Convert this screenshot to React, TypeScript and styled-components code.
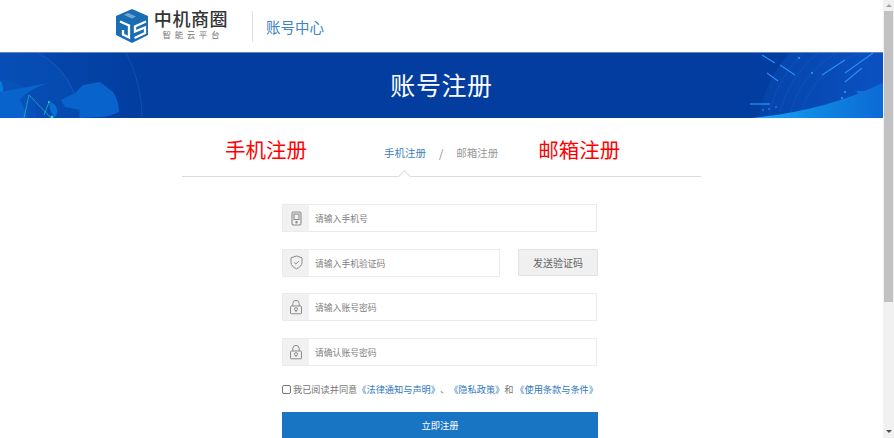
import React from "react";
import styled, { createGlobalStyle } from "styled-components";

const Global = createGlobalStyle`
  html, body { margin: 0; padding: 0; overflow: hidden; background: #fff; }
  * { box-sizing: border-box; }
`;
const Shell = styled.div`
  width: 894px; height: 438px; display: flex; overflow: hidden;
  font-family: "Noto Sans CJK SC", "Liberation Sans", sans-serif; background: #fff;
`;
const Main = styled.div`flex: 1; min-width: 0; display: flex; flex-direction: column;`;
const Header = styled.header`
  height: 52px; flex: none; display: flex; align-items: center; padding: 0 0 0 115px; background: #fff;
`;
const LogoWords = styled.div`
  display: flex; flex-direction: column; align-items: center; margin-left: 5px; width: 74px; margin-top: -2px;
  font-family: "Liberation Sans", "Noto Sans CJK SC", sans-serif;
`;
const LogoName = styled.div`
  font-size: 18px; line-height: 20px; font-weight: 500; color: #333; letter-spacing: 0.6px; white-space: nowrap;
`;
const LogoSub = styled.div`font-size: 8.5px; line-height: 11px; color: #777; letter-spacing: 3.6px; margin-right: -3.6px; white-space: nowrap;`;
const Divider = styled.div`width: 1px; height: 31px; background: #e2e2e2; margin: 0 13px 0 24px;`;
const CenterTitle = styled.div`font-size: 14.5px; color: #3d83c5; white-space: nowrap; margin-top: 1px;`;
const Banner = styled.section`
  position: relative; height: 66px; flex: none; display: flex; align-items: center; justify-content: center;
  overflow: hidden; background: #023d9f; border-top: 1px solid #5f86c6; padding-bottom: 3px;
`;
const BannerArt = styled.svg`position: absolute; inset: 0; width: 100%; height: 100%;`;
const BannerTitle = styled.h1`
  position: relative; margin: 0; font-size: 25px; font-weight: 400; color: #fff; letter-spacing: 0.6px; line-height: 1;
`;
const Content = styled.main`display: flex; flex-direction: column; align-items: center;`;
const TabBar = styled.div`
  position: relative; width: 519px; height: 59px; display: flex; align-items: center;
  border-bottom: 1px solid #dcdcdc; padding-left: 43px;
`;
const RedLabel = styled.span`font-size: 20.5px; line-height: 1; color: #ff0000; white-space: nowrap; margin-top: 5px;`;
const Tab = styled.span<{ $active?: boolean }>`
  font-size: 10.5px; line-height: 1; white-space: nowrap; margin-top: 12px;
  color: ${(p) => (p.$active ? "#3f7fbd" : "#999")};
`;
const Slash = styled.span`font-size: 11px; color: #888; line-height: 1; margin: 12px 13px 0 13px;`;
const Notch = styled.i`
  position: absolute; left: 218px; bottom: -5px; width: 9px; height: 9px; background: #fff;
  border-left: 1px solid #dcdcdc; border-top: 1px solid #dcdcdc; transform: rotate(45deg);
`;
const Form = styled.form`
  width: 316px; margin-left: -3px; padding-top: 27px; display: flex; flex-direction: column;
`;
const Row = styled.div`display: flex; justify-content: space-between; height: 28px; margin-bottom: 16.5px;`;
const Field = styled.label<{ $w: number }>`
  width: ${(p) => p.$w}px; height: 28px; display: flex; border: 1px solid #ebebeb; background: #fff;
`;
const IconBox = styled.span`
  width: 26px; flex: none; display: flex; align-items: center; justify-content: center; background: #f1f1f1;
`;
const Placeholder = styled.span`
  flex: 1; padding: 1px 0 0 6px; font-size: 8.8px; line-height: 26px; color: #808080; white-space: nowrap;
`;
const SendBtn = styled.button`
  width: 80px; height: 27px; padding: 0; border: 1px solid #e2e2e2; border-radius: 1px; background: #f0f0f0;
  font: inherit; font-size: 10px; color: #666;
`;
const Agree = styled.div`
  display: flex; align-items: center; height: 12px; margin-top: 1px; font-size: 9.2px; line-height: 12px; color: #777; white-space: nowrap;
`;
const Check = styled.span`
  width: 9px; height: 9px; border: 1px solid #777; border-radius: 2px; background: #fff; margin: 0 2px 0 0; flex: none;
`;
const DocLink = styled.a`color: #2f78bd;`;
const Gap = styled.span<{ $w: number }>`display: inline-block; width: ${(p) => p.$w}px;`;
const Submit = styled.button`
  width: 316px; height: 34px; margin-top: 17px; flex: none; border: 0; padding: 0 0 9px; background: #1875c3; color: #fff; font: inherit; font-size: 9.3px;
`;
const Rail = styled.div`
  width: 11px; flex: none; height: 438px; background: #f1f1f1; display: flex; flex-direction: column; align-items: center;
`;
const Arrow = styled.i<{ $down?: boolean }>`
  width: 0; height: 0; border-left: 3px solid transparent; border-right: 3px solid transparent; flex: none;
  ${(p) => (p.$down ? "border-top: 3px solid #505050; margin-top: auto; margin-bottom: 5px;" : "border-bottom: 3px solid #a3a3a3; margin-top: 4px;")}
`;
const Thumb = styled.div`width: 9px; height: 291px; margin-top: 4px; background: #c1c1c1; flex: none;`;

const PhoneIcon = () => (
  <svg width="13" height="15" viewBox="0 0 13 15" fill="none" stroke="#8b8b8b" strokeWidth="1.1">
    <rect x="2" y="1" width="9" height="13" rx="1.5" />
    <rect x="4" y="3" width="5" height="5.5" />
    <circle cx="6.5" cy="11.2" r="0.7" fill="#8b8b8b" />
  </svg>
);
const ShieldIcon = () => (
  <svg width="15" height="15" viewBox="0 0 15 15" fill="none" stroke="#8b8b8b" strokeWidth="1">
    <path d="M7.5 1 13 2.8v4.6c0 3-2.4 5-5.5 6.4C4.4 12.4 2 10.4 2 7.4V2.8Z" />
    <path d="m5.2 7.4 1.7 1.6 3-2.9" />
  </svg>
);
const LockIcon = () => (
  <svg width="14" height="16" viewBox="0 0 14 16" fill="none" stroke="#8b8b8b" strokeWidth="1">
    <path d="M3.8 7V4.6a3.2 3.2 0 0 1 6.4 0V7" />
    <rect x="1.5" y="7" width="11" height="7.8" rx="0.8" />
    <circle cx="7" cy="10.2" r="1.5" />
    <path d="M7 11.7v1.3" />
  </svg>
);
const Cube = () => (
  <svg width="34" height="34" viewBox="0 0 34 34" fill="none">
    <path d="M17 0 33 7V26L17 34 1 26V7Z" fill="#1a6db3" />
    <path d="M13 4 21 7.5 17 9.5 9 6Z" fill="#74a6d4" />
    <path d="M5 12.5 14 16.5V28.5L8 25.5V21" stroke="#fff" strokeWidth="2.3" />
    <path d="M31 12.5 20 17.5V22.5L30 18.5V24L19.5 29" stroke="#fff" strokeWidth="2.3" />
  </svg>
);

export default function App() {
  return (
    <Shell>
      <Global />
      <Main>
        <Header>
          <Cube />
          <LogoWords>
            <LogoName>中机商圈</LogoName>
            <LogoSub>智能云平台</LogoSub>
          </LogoWords>
          <Divider />
          <CenterTitle>账号中心</CenterTitle>
        </Header>
        <Banner>
          <BannerArt viewBox="0 0 883 65" preserveAspectRatio="none">
            <defs>
              <linearGradient id="wave" x1="0" x2="1" y1="0" y2="0">
                <stop offset="0" stopColor="#18a8f2" />
                <stop offset="0.5" stopColor="#0f86e2" />
                <stop offset="1" stopColor="#0c6ad6" />
              </linearGradient>
              <linearGradient id="haze" x1="0" x2="1" y1="0" y2="0">
                <stop offset="0" stopColor="#0a4fbc" stopOpacity="0.35" />
                <stop offset="0.45" stopColor="#0a50c0" stopOpacity="1" />
                <stop offset="1" stopColor="#0652cc" />
              </linearGradient>
              <linearGradient id="leftFade" x1="0" x2="1" y1="0" y2="0">
                <stop offset="0" stopColor="#0a58c4" />
                <stop offset="1" stopColor="#023d9f" />
              </linearGradient>
            </defs>
            <circle cx="0" cy="65" r="142" fill="url(#leftFade)" />
            <circle cx="0" cy="65" r="142" stroke="#1a57b4" strokeWidth="0.7" fill="none" />
            <circle cx="0" cy="70" r="80" stroke="#1a66c4" strokeWidth="0.7" fill="#0a55bc" fillOpacity="0.35" />
            <circle cx="0" cy="62" r="36" fill="#0a5fc6" fillOpacity="0.3" />
            <ellipse cx="0" cy="37" rx="3" ry="9" fill="#0a78dc" />
            <path d="M0 39 48 30C38 34 26 38 20 47 23 53 26 58 27 65H0Z" fill="#0864cc" />
            <path d="M61 47 75 40 83 32 100 29 113 39C117 45 119 52 119 59 112 62 106 64 100 64L80 65 80 57 65 54Z" fill="#0864cc" />
            <path d="M50 49C56 50 60 58 55 64 51 60 48 55 50 49Z" fill="#0a6ed4" />
            <path d="M29 42 24 65M29 42 50 64M49 49 44 62" stroke="#1aa8c4" strokeWidth="0.9" />
            <circle cx="52" cy="64" r="1.5" fill="#1fe0c0" />
            <circle cx="49" cy="49" r="1" fill="#1fe0c0" />
            <circle cx="885" cy="85" r="128" fill="url(#haze)" />
            <g stroke="#1c66d4" strokeWidth="0.5" fill="none" opacity="0.7">
              <circle cx="885" cy="85" r="118" />
              <circle cx="885" cy="85" r="108" />
              <circle cx="885" cy="85" r="98" />
              <circle cx="885" cy="85" r="88" />
            </g>
            <g stroke="#2a8ff5" strokeWidth="1.1" fill="none">
              <path d="M762 2 775 10M780 12 795 22M767 20 778 28" />
              <path d="M822 22 845 7M845 20 873 0M845 29 862 15M857 39 867 39" />
              <path d="M750 51H770" stroke="#2fa0ff" />
            </g>
            <path d="M752 65C800 60 840 50 883 30V65Z" fill="url(#wave)" />
            <g fill="#3c9cf0">
              <circle cx="799" cy="5" r="1" />
              <circle cx="812" cy="20" r="1" />
              <circle cx="845" cy="39" r="1.1" />
              <circle cx="842" cy="45" r="1" />
              <circle cx="763" cy="57" r="0.8" />
              <circle cx="769" cy="56" r="0.8" />
              <circle cx="776" cy="54" r="0.8" />
            </g>
          </BannerArt>
          <BannerTitle>账号注册</BannerTitle>
        </Banner>
        <Content>
          <TabBar>
            <RedLabel>手机注册</RedLabel>
            <Gap $w={77} />
            <Tab $active>手机注册</Tab>
            <Slash>/</Slash>
            <Tab>邮箱注册</Tab>
            <Gap $w={40} />
            <RedLabel>邮箱注册</RedLabel>
            <Notch />
          </TabBar>
          <Form>
            <Row>
              <Field $w={315}>
                <IconBox><PhoneIcon /></IconBox>
                <Placeholder>请输入手机号</Placeholder>
              </Field>
            </Row>
            <Row>
              <Field $w={218}>
                <IconBox><ShieldIcon /></IconBox>
                <Placeholder>请输入手机验证码</Placeholder>
              </Field>
              <SendBtn type="button">发送验证码</SendBtn>
            </Row>
            <Row>
              <Field $w={315}>
                <IconBox><LockIcon /></IconBox>
                <Placeholder>请输入账号密码</Placeholder>
              </Field>
            </Row>
            <Row>
              <Field $w={315}>
                <IconBox><LockIcon /></IconBox>
                <Placeholder>请确认账号密码</Placeholder>
              </Field>
            </Row>
            <Agree>
              <Check />
              我已阅读并同意
              <DocLink>《法律通知与声明》</DocLink>、<DocLink>《隐私政策》</DocLink>和
              <Gap $w={3} />
              <DocLink>《使用条款与条件》</DocLink>
            </Agree>
            <Submit type="button">立即注册</Submit>
          </Form>
        </Content>
      </Main>
      <Rail>
        <Arrow />
        <Thumb />
        <Arrow $down />
      </Rail>
    </Shell>
  );
}
